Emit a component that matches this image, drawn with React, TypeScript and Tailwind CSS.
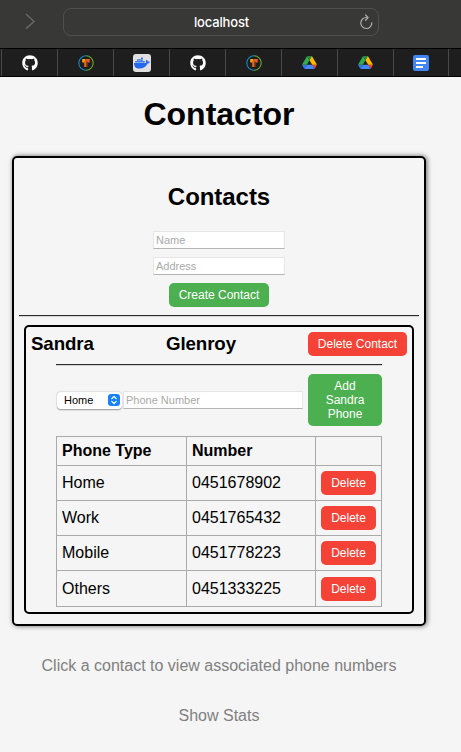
import React from "react";
import { FaDocker, FaGithub } from "react-icons/fa";

function TerminalRing() {
  return (
    <svg viewBox="0 0 16 16" className="h-4 w-4">
      <path d="M8 .8A7.2 7.2 0 0 0 8 15.2" fill="none" stroke="#1489c4" strokeWidth="1.1" />
      <path d="M8 .8A7.2 7.2 0 0 1 8 15.2" fill="none" stroke="#6ba82c" strokeWidth="1.1" />
      <path d="M4.200 4h3.300v3.500H4.200z" fill="#f5a417" />
      <path d="M8 4h3.700v3.500H8z" fill="#ee5a24" />
      <path d="M6.200 5.500H8V12H6.200z" fill="#d9701b" />
      <path d="M8 6.500h1.700V12H8z" fill="#962f1c" />
    </svg>
  );
}

function Drive() {
  return (
    <svg viewBox="0 0 87.3 78" className="h-[13px] w-[15px]">
      <path d="m6.600 66.850 3.850 6.650c.8 1.400 1.950 2.500 3.300 3.300l13.750-23.800h-27.500c0 1.550.4 3.100 1.200 4.500z" fill="#3874e0" />
      <path d="m43.650 25-13.750-23.800c-1.350.8-2.500 1.900-3.300 3.300l-25.400 44a9.060 9.060 0 0 0 -1.200 4.500h27.500z" fill="#34a853" />
      <path d="m73.550 76.800c1.350-.8 2.500-1.900 3.300-3.300l1.600-2.750 7.650-13.250c.8-1.400 1.200-2.950 1.200-4.500h-27.500l5.850 11.500z" fill="#ea4335" />
      <path d="m43.650 25 13.750-23.800c-1.350-.8-2.900-1.200-4.500-1.200h-18.500c-1.600 0-3.150.45-4.500 1.200z" fill="#1e8e3e" />
      <path d="m59.800 53h-32.300l-13.750 23.800c1.350.8 2.900 1.200 4.500 1.200h50.800c1.600 0 3.150-.45 4.500-1.200z" fill="#4285f4" />
      <path d="m73.400 26.500-12.700-22c-.8-1.400-1.950-2.500-3.300-3.300l-13.750 23.800 16.150 28h27.450c0-1.550-.4-3.100-1.200-4.500z" fill="#ffba00" />
    </svg>
  );
}

function Github() {
  return <FaGithub className="h-4 w-4 text-white" />;
}

function Docker() {
  return (
    <span className="flex h-[18px] w-[18px] items-center justify-center rounded-[3px] bg-[#e0e0e0]">
      <FaDocker className="h-4 w-4 text-[#2468ee]" />
    </span>
  );
}

function Docs() {
  return (
    <span className="flex h-4 w-4 flex-col justify-center gap-[2px] rounded-[2px] bg-[#4285f4] pl-[3px]">
      <span className="h-[2px] w-[10px] bg-white" />
      <span className="h-[2px] w-[10px] bg-white" />
      <span className="h-[2px] w-[7px] bg-white" />
    </span>
  );
}

const tabs = [Github, TerminalRing, Docker, Github, TerminalRing, Drive, Drive, Docs];

const phones = [
  { type: "Home", number: "0451678902" },
  { type: "Work", number: "0451765432" },
  { type: "Mobile", number: "0451778223" },
  { type: "Others", number: "0451333225" },
];

const field =
  "block h-[18px] border border-[#e6e6e6] border-b-[#b4b4b4] bg-white px-[2px] text-[11px] leading-4 outline-none placeholder:text-[#a9a9a9] placeholder:opacity-100";

function Rule({ className }: { className: string }) {
  return <div className={`h-[2px] border-t border-b border-t-[#2c2c2c] border-b-[#d2d2d2] ${className}`} />;
}

function DeleteButton() {
  return <button className="block h-6 w-[55px] rounded-[5px] bg-[#f44336] text-xs text-white">Delete</button>;
}

export default function App() {
  return (
    <div className="h-[752px] w-[461px] overflow-hidden bg-[#f5f5f5] font-['Liberation_Sans',Arial,sans-serif] text-black">
      <header>
        <div className="flex h-12 bg-[#383836] pt-2">
          <svg viewBox="0 0 10 16" className="mt-[5px] ml-[25px] h-4 w-[10px]" fill="none" stroke="#666664" strokeWidth="1.600" strokeLinecap="round" strokeLinejoin="round">
            <path d="M1.500 1.500 9 8.500l-7.500 6.700" />
          </svg>
          <div className="ml-[28px] flex h-7 w-[316px] items-center rounded-[8px] border border-[#50504e] pr-[5px]">
            <span className="flex-1 pt-[2px] pl-5 text-center font-['Inter',sans-serif] text-[13px] font-medium tracking-[-0.150px] text-white">localhost</span>
            <svg viewBox="0 0 14 16" className="h-4 w-[14px]" fill="none" stroke="#b2b2b0" strokeWidth="1.200" strokeLinecap="round" strokeLinejoin="round">
              <path d="M7.500 3.500A5.500 5.500 0 1 0 12.800 8.800M6.500.9 9.100 3.500 6.500 6.300" />
            </svg>
          </div>
        </div>
        <nav className="flex h-[29px] border-t border-b border-black bg-[#1e1e1e] pl-px">
          {tabs.map((Icon, i) => (
            <div key={i} className="flex w-14 shrink-0 items-center justify-center border-l border-[#4a4a4a] last-of-type:w-3 nth-[8]:w-[55px]">
              <Icon />
            </div>
          ))}
          <span className="flex-1 border-l border-[#4a4a4a]" />
        </nav>
      </header>

      <main className="ml-3 w-[414px]">
        <h1 className="h-[79px] pt-[19px] text-center text-[32px] leading-[37px] font-bold">Contactor</h1>
        <section className="h-[470px] rounded-[5px] border-2 border-black pt-[25px] shadow-[1px_0_5px_rgba(0,0,0,0.6)]">
          <h2 className="text-center text-2xl leading-7 font-bold tracking-[-0.050px]">Contacts</h2>
          <form className="mt-5 flex flex-col items-center">
            <input className={`${field} w-[132px]`} placeholder="Name" />
            <input className={`${field} mt-2 w-[132px]`} placeholder="Address" />
            <button type="button" className="mt-2 h-6 w-[100px] rounded-[5px] bg-[#4caf50] text-xs text-white">Create Contact</button>
          </form>
          <Rule className="mx-[5px] mt-2" />
          <article className="mx-[10px] mt-2 h-[289px] rounded-[5px] border-2 border-black pt-[5px]">
            <div className="flex h-6 items-center pr-[5px] pl-[5px] text-[18.720px] font-bold tracking-[-0.100px]">
              <h3 className="w-[135px]">Sandra</h3>
              <h3 className="flex-1">Glenroy</h3>
              <button className="h-6 w-[99px] rounded-[5px] bg-[#f44336] text-xs font-normal tracking-normal text-white">Delete Contact</button>
            </div>
            <div className="mx-[30px]">
              <Rule className="mt-2" />
              <form className="mt-2 flex h-[52px] items-center">
                <button type="button" className="ml-px flex h-[17px] w-[65px] items-center justify-between rounded-[4px] bg-white pr-[2px] pl-[7px] text-[11px] shadow-[0_0.500px_1.500px_rgba(0,0,0,0.4)]">
                  Home
                  <svg viewBox="0 0 12 12" className="h-3 w-3 rounded-[3px] bg-[#1683fb]" fill="none" stroke="white" strokeWidth="1.200" strokeLinecap="round" strokeLinejoin="round">
                    <path d="M3.800 4.700 6 2.500l2.200 2.200M3.800 7.300 6 9.500l2.200-2.200" />
                  </svg>
                </button>
                <input className={`${field} ml-px w-[180px]`} placeholder="Phone Number" />
                <button type="button" className="ml-[5px] h-[52px] w-[74px] rounded-[5px] bg-[#4caf50] px-3 text-xs leading-[14px] text-white">Add Sandra Phone</button>
              </form>
              <table className="mt-[10px] w-[326px] table-fixed border-collapse text-left text-base [&_td]:border [&_td]:border-[#aaa] [&_td]:p-0 [&_td]:pl-[5px] [&_th]:border [&_th]:border-[#aaa] [&_th]:p-0 [&_th]:pl-[5px]">
                <colgroup>
                  <col className="w-[130px]" />
                  <col className="w-[129px]" />
                  <col className="w-[66px]" />
                </colgroup>
                <thead>
                  <tr className="h-[29px]">
                    <th>Phone Type</th>
                    <th>Number</th>
                    <th />
                  </tr>
                </thead>
                <tbody>
                  {phones.map((phone) => (
                    <tr key={phone.type} className="h-[35px] last:h-9">
                      <td>{phone.type}</td>
                      <td>{phone.number}</td>
                      <td><DeleteButton /></td>
                    </tr>
                  ))}
                </tbody>
              </table>
            </div>
          </article>
        </section>
        <footer className="mt-[31px] text-center text-base leading-[18px] text-[#808080]">
          <p>Click a contact to view associated phone numbers</p>
          <p className="mt-8">Show Stats</p>
        </footer>
      </main>
    </div>
  );
}
